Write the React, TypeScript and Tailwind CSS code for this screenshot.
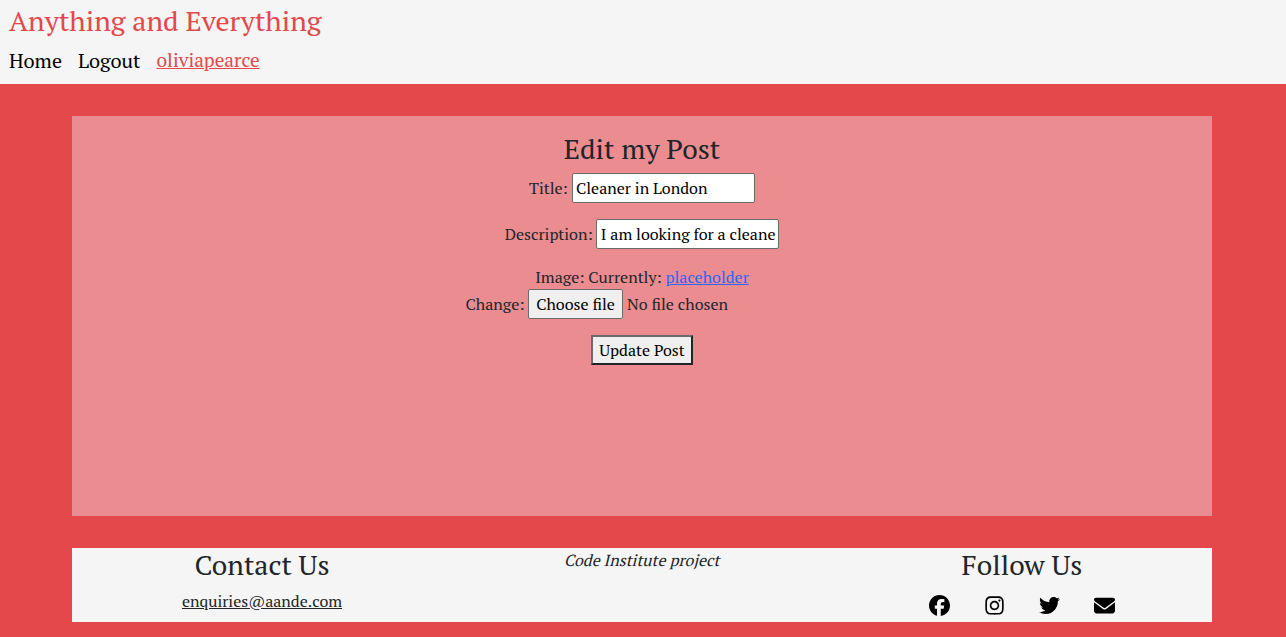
import React from 'react';
import { FaFacebook, FaInstagram, FaTwitter, FaEnvelope } from 'react-icons/fa6';

const heading = 'h-[34px] text-[28px] leading-[33.6px] whitespace-nowrap';

function Header() {
  return (
    <header className="h-[84px] bg-[#f5f5f5] pt-1 pl-[9px]">
      <h1 className={`${heading} text-[#e4484b]`}>Anything and Everything</h1>
      <nav className="mt-2 flex h-[30px] text-[20px] leading-[30px] whitespace-nowrap text-black">
        <a className="w-[69px]">Home</a>
        <a className="w-[78.5px]">Logout</a>
        <a className="-mt-px text-[19.2px] text-[#e4484b] underline">oliviapearce</a>
      </nav>
    </header>
  );
}

function EditForm() {
  const field = 'h-[30px] w-[183px] rounded-[2px] border border-[#6b6b6b] bg-white text-black outline-none';
  return (
    <main className="mt-8 ml-[72px] h-[400px] w-[1140px] bg-[#eb8c91] pt-4">
      <h2 className={`${heading} text-center`}>Edit my Post</h2>
      <form className="mt-[7px] flex flex-col items-center whitespace-nowrap">
        <div className="flex h-[30px] w-[226px] items-center justify-between">
          <label>Title:</label>
          <input className={`${field} pl-[3px]`} defaultValue="Cleaner in London" />
        </div>
        <div className="mt-4 flex h-[30px] w-[274.6px] items-center justify-between">
          <label>Description:</label>
          <input className={`${field} pr-0.5 pl-[3.5px]`} defaultValue="I am looking for a cleane" />
        </div>
        <div className="mt-4 flex h-6 w-[213.6px] items-center justify-between">
          <span>Image: Currently:</span>
          <a className="text-[#2b66f6] underline">placeholder</a>
        </div>
        <div className="flex h-[30px] w-[353px] items-center">
          <label className="w-[62.5px]">Change:</label>
          <button type="button" className="h-[30px] w-[95px] rounded-[2px] border border-[#6b6b6b] bg-[#efefef] text-black">Choose file</button>
          <span className="ml-1">No file chosen</span>
        </div>
        <button type="button" className="mt-4 h-[30px] w-[102px] border-2 border-t-[#6b6b6b] border-r-[#212529] border-b-[#212529] border-l-[#6b6b6b] bg-[#efefef] text-black">Update Post</button>
      </form>
    </main>
  );
}

function Footer() {
  return (
    <footer className="mt-8 ml-[72px] grid h-[74px] w-[1140px] grid-cols-3 bg-[#f5f5f5] text-center whitespace-nowrap">
      <section>
        <h2 className={heading}>Contact Us</h2>
        <a className="mt-[7px] block leading-6 underline">enquiries@aande.com</a>
      </section>
      <p className="leading-6">
        <span className="inline-block origin-[50%_75%] -skew-x-[14deg]">Code Institute project</span>
      </p>
      <section>
        <h2 className={heading}>Follow Us</h2>
        <div className="mt-[13px] ml-[97px] flex h-[21px] w-[186px] items-center justify-between text-[21px] text-black">
          <FaFacebook />
          <FaInstagram />
          <FaTwitter />
          <FaEnvelope />
        </div>
      </section>
    </footer>
  );
}

export default function App() {
  return (
    <div className="h-[637px] overflow-hidden bg-[#e4484b] font-['PT_Serif','Liberation_Serif',serif] text-base leading-6 text-[#212529]">
      <Header />
      <EditForm />
      <Footer />
    </div>
  );
}
